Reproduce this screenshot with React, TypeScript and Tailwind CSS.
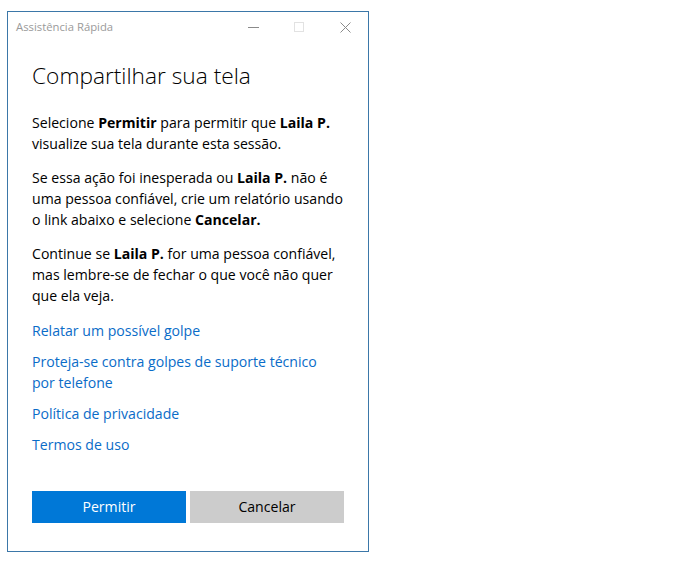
import React from 'react';

const font = { fontFamily: '"Open Sans", "Noto Sans", sans-serif' };

export default function App() {
  return (
    <div className="min-h-[563px] bg-white pl-[7px] pt-[11px]" style={font}>
      <div className="flex h-[541px] w-[362px] flex-col border border-[#3b77a8] bg-white">
        {/* barra de título */}
        <div className="flex h-[30px] items-center justify-between pl-2">
          <span className="text-[11.3px] text-[#9a9a9a]">Assistência Rápida</span>
          <div className="flex h-full items-center">
            <div className="flex h-full w-[46px] items-center justify-center">
              <div className="h-px w-[11px] bg-[#8a8a8a]" />
            </div>
            <div className="flex h-full w-[46px] items-center justify-center">
              <div className="h-[10px] w-[10px] border border-[#e2e2e2]" />
            </div>
            <div className="flex h-full w-[46px] items-center justify-center">
              <svg width="11" height="11" viewBox="0 0 11 11">
                <path d="M0.5 0.5 L10.5 10.5 M10.5 0.5 L0.5 10.5" stroke="#8a8a8a" strokeWidth="1" />
              </svg>
            </div>
          </div>
        </div>

        <div className="flex flex-1 flex-col px-6 pb-[28px]">
          <h1 className="mt-[19px] text-[22.7px] font-light leading-[30px] text-black">Compartilhar sua tela</h1>

          <div className="mt-[21px] space-y-[13px] text-[14.1px] leading-[21px] text-black">
            <p>
              Selecione <b className="font-bold">Permitir</b> para permitir que <b className="font-bold">Laila P.</b> visualize sua tela durante esta sessão.
            </p>
            <p>
              Se essa ação foi inesperada ou <b className="font-bold">Laila P.</b> não é uma pessoa confiável, crie um relatório usando o link abaixo e selecione <b className="font-bold">Cancelar.</b>
            </p>
            <p>
              Continue se <b className="font-bold">Laila P.</b> for uma pessoa confiável, mas lembre-se de fechar o que você não quer que ela veja.
            </p>
          </div>

          <div className="mt-[14px] flex flex-col gap-[10px] pr-6 text-[14.1px] leading-[21px] text-[#0a6cc8]">
            <a>Relatar um possível golpe</a>
            <a>Proteja-se contra golpes de suporte técnico por telefone</a>
            <a>Política de privacidade</a>
            <a>Termos de uso</a>
          </div>

          <div className="mt-auto flex gap-1">
            <button className="h-8 flex-1 bg-[#0078d7] text-[14.1px] text-white">Permitir</button>
            <button className="h-8 flex-1 bg-[#cccccc] text-[14.1px] text-black">Cancelar</button>
          </div>
        </div>
      </div>
    </div>
  );
}
